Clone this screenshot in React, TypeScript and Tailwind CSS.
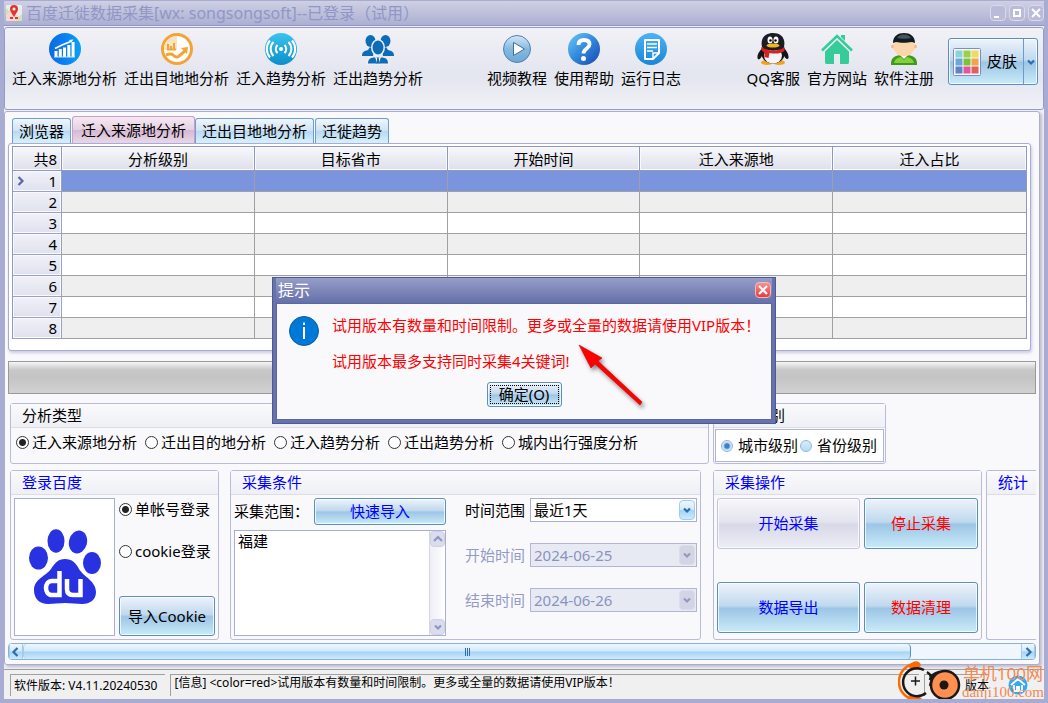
import React, { useState } from 'react';

const BLUE_BTN =
  'rounded-[3px] border border-[#5b8fc0] bg-[linear-gradient(to_bottom,#eef3fb_0%,#c0d9ee_46%,#9dc5e5_52%,#c9ebf9_100%)] shadow-[inset_0_0_0_1px_rgba(255,255,255,0.75)]';
const GRAY_BTN =
  'rounded-[3px] border border-[#c3c4dc] bg-[linear-gradient(to_bottom,#f6f6fa_0%,#e4e4ee_46%,#d8d9e7_52%,#ecedf5_100%)] shadow-[inset_0_0_0_1px_rgba(255,255,255,0.75)]';
const SMALL_BLUE =
  'border border-[#a5cbea] bg-[linear-gradient(to_bottom,#eef8ff_0%,#cfe9fb_48%,#a5d3f3_52%,#cdeaff_100%)]';
const RADIO =
  "m-0 h-[13px] w-[13px] shrink-0 appearance-none rounded-full border border-[#333] bg-white checked:bg-[radial-gradient(circle,#222_0_3px,#fff_4px)]";
const RADIO_BLUE =
  'm-0 h-3 w-3 shrink-0 appearance-none rounded-full border border-[#8fb4dc] bg-[linear-gradient(to_bottom,#d8ecf9,#b5dcf5)] checked:bg-[radial-gradient(circle,#3c80c8_0_2px,#d3e9f9_4px)]';

const columns = ['分析级别', '目标省市', '开始时间', '迁入来源地', '迁入占比'];
const rows = [1, 2, 3, 4, 5, 6, 7, 8];
const types = ['迁入来源地分析', '迁出目的地分析', '迁入趋势分析', '迁出趋势分析', '城内出行强度分析'];
const tabs = ['浏览器', '迁入来源地分析', '迁出目地地分析', '迁徙趋势'];

function Chevron({ dir, color = '#2f6cae' }: { dir: 'left' | 'right' | 'up' | 'down'; color?: string }) {
  const d = {
    left: 'M6.5 1 2.5 5l4 4',
    right: 'M3.5 1l4 4-4 4',
    up: 'M1 7l4-4 4 4',
    down: 'M2 3.5l3 3 3-3',
  }[dir];
  return (
    <svg width="10" height="10" viewBox="0 0 10 10" fill="none" stroke={color} strokeWidth="2.2">
      <path d={d} />
    </svg>
  );
}

/* ---- toolbar icons ---- */

const ChartIcon = () => (
  <svg width="32" height="32" viewBox="0 0 32 32">
    <defs>
      <linearGradient id="chart" x1="0" y1="0" x2="1" y2="0">
        <stop offset="0" stopColor="#0a6de0" />
        <stop offset=".5" stopColor="#0a80f5" />
        <stop offset="1" stopColor="#0aa2f2" />
      </linearGradient>
    </defs>
    <circle cx="16" cy="16" r="16" fill="url(#chart)" />
    <path d="M5.500 24v-6h3v6zM9.800 24v-8h3v8zM14 24v-9.500h3V24zM18.300 24V12h3v12zM22.600 24V9h3v15z" fill="#fff" />
    <path d="M6 15.500 13 12l5-2 5-2" fill="none" stroke="#fff" strokeWidth="1.500" />
    <path d="M20 7l4.500-.5-2.500 3z" fill="#fff" />
    <path d="M5 24h21" stroke="#cfe6ff" />
  </svg>
);

const OutIcon = () => (
  <svg width="32" height="32" viewBox="0 0 32 32">
    <circle cx="16" cy="16" r="14.500" fill="#fff" stroke="#f4a335" strokeWidth="3" />
    <path d="M3 17A13 13 0 0 1 16 3v14z" fill="#fbe3bf" />
    <path d="M7 11v5M10 13v3M13 10v6M6 16.500h9" stroke="#f4a335" strokeWidth="2" />
    <path d="M5 22c3-1 5-2 7 0s4 3 6 1l7-6" fill="none" stroke="#f4a335" strokeWidth="3" />
    <path d="M20 15l7-1-1 7z" fill="#f4a335" />
  </svg>
);

const SignalIcon = () => (
  <svg width="32" height="32" viewBox="0 0 32 32">
    <defs>
      <linearGradient id="sig" x1="0" y1="0" x2="0" y2="1">
        <stop offset="0" stopColor="#3cc3ee" />
        <stop offset="1" stopColor="#0a8fcb" />
      </linearGradient>
    </defs>
    <circle cx="16" cy="16" r="16" fill="url(#sig)" />
    <circle cx="16" cy="16" r="2" fill="#fff" />
    <path
      d="M12.500 12a5.500 5.500 0 0 0 0 8M19.500 12a5.500 5.500 0 0 1 0 8M8.500 9a10 10 0 0 0 0 14M23.500 9a10 10 0 0 1 0 14M5 7.500a13 13 0 0 0 0 17M27 7.500a13 13 0 0 1 0 17"
      fill="none"
      stroke="#fff"
      strokeWidth="2"
    />
  </svg>
);

const PeopleIcon = () => (
  <svg width="32" height="32" viewBox="0 0 32 32" fill="#0c6cb8">
    <ellipse cx="8.500" cy="8" rx="5" ry="6" />
    <ellipse cx="23.500" cy="8" rx="5" ry="6" />
    <path d="M0 23c0-4 2-5 6-6l2-3 4 3-1 6zM32 23c0-4-2-5-6-6l-2-3-4 3 1 6z" />
    <path d="M4 32c0-6 3-8 8-8h8c5 0 8 2 8 8z" fill="#eceef6" />
    <path d="M6 30.500c0-4 2-6 7-6h6c5 0 7 2 7 6z" />
    <ellipse cx="16" cy="14.500" rx="6.200" ry="7.800" stroke="#eceef6" strokeWidth="1.500" />
    <path d="M13 23.500l3 2 3-2-2 7h-2z" fill="#fff" />
    <path d="M15.300 25h1.400l1 5.500h-3.400z" />
  </svg>
);

const PlayIcon = () => (
  <svg width="32" height="32" viewBox="0 0 32 32">
    <defs>
      <linearGradient id="play" x1="0" y1="0" x2="0" y2="1">
        <stop offset="0" stopColor="#d5e8f6" />
        <stop offset=".5" stopColor="#86b9df" />
        <stop offset="1" stopColor="#6ea7d5" />
      </linearGradient>
    </defs>
    <circle cx="16" cy="16" r="13.500" fill="url(#play)" stroke="#4f80b2" />
    <path d="M12.500 9.500v13l11-6.500z" fill="#fff" stroke="#3e6ea4" />
  </svg>
);

const HelpIcon = () => (
  <svg width="32" height="32" viewBox="0 0 32 32">
    <defs>
      <linearGradient id="help" x1="0" y1="0" x2="1" y2="1">
        <stop offset="0" stopColor="#6cc9f5" />
        <stop offset=".5" stopColor="#3287dc" />
        <stop offset="1" stopColor="#1745ad" />
      </linearGradient>
    </defs>
    <circle cx="16" cy="16" r="16" fill="url(#help)" />
    <path d="M10.500 12c0-3.500 2-5 5.500-5s5.500 1.500 5.500 4.500c0 4-6 4-6 9" fill="none" stroke="#fff" strokeWidth="3.800" />
    <circle cx="15.500" cy="25.500" r="2.500" fill="#fff" />
  </svg>
);

const LogIcon = () => (
  <svg width="32" height="32" viewBox="0 0 32 32">
    <defs>
      <linearGradient id="log" x1="0" y1="0" x2="0" y2="1">
        <stop offset="0" stopColor="#4fb2f4" />
        <stop offset="1" stopColor="#1a86d6" />
      </linearGradient>
    </defs>
    <circle cx="16" cy="16" r="16" fill="url(#log)" />
    <path d="M15 26h-5V7h14v13l-6 6z" fill="none" stroke="#fff" strokeWidth="2" strokeLinejoin="round" />
    <path d="M12 11h10M12 14.500h10M12 18h6" stroke="#fff" strokeWidth="1.500" />
    <path d="M18 25v-5h5" fill="none" stroke="#fff" strokeWidth="1.500" />
  </svg>
);

const PenguinIcon = () => (
  <svg width="32" height="32" viewBox="0 0 32 32">
    <ellipse cx="10" cy="29.500" rx="6" ry="2.500" fill="#f6a21b" />
    <ellipse cx="22" cy="29.500" rx="6" ry="2.500" fill="#f6a21b" />
    <path d="M6 14C4 17 0 20 0.500 25c1 3 3 1 5-3l21 0c2 4 4 5 5 3 .5-5-3-8-5-11z" fill="#15161c" />
    <ellipse cx="16" cy="21" rx="11.500" ry="9.500" fill="#15161c" />
    <ellipse cx="16" cy="22.500" rx="9" ry="8" fill="#f4f4f8" />
    <path d="M5 14C3 4 9 0 16 0s13 4 11 14c-6 5-16 5-22 0z" fill="#1b1d24" />
    <ellipse cx="13" cy="7" rx="2.500" ry="3.500" fill="#fff" />
    <ellipse cx="19" cy="7" rx="2.500" ry="3.500" fill="#fff" />
    <circle cx="13.500" cy="7.500" r="1.200" />
    <circle cx="18.500" cy="7.500" r="1.200" />
    <ellipse cx="16" cy="12.500" rx="6.500" ry="2" fill="#f7b51d" />
    <path d="M4.500 14c7 5 16 5 23 0l0 4c-5 3-9 3-15 2l-1 5-4-1v-5c-2 0-4-2-3-5z" fill="#dc1f1f" />
  </svg>
);

const HomeIcon = () => (
  <svg width="32" height="32" viewBox="0 0 32 32" fill="#36cc9a">
    <path d="M1 17.500 16 3l15 14.500" fill="none" stroke="#36cc9a" strokeWidth="2.600" />
    <path d="M4 18.500 16 7l12 11.500v11q0 1.500-2 1.500h-7V21h-6v10H6q-2 0-2-1.500z" />
    <path d="M20 4V2h4v6z" />
  </svg>
);

const UserIcon = () => (
  <svg width="32" height="32" viewBox="0 0 32 32">
    <path d="M3 31c0-6 3-8 9-9h8c6 1 9 3 9 9v1H3z" fill="#3c9a1d" />
    <path d="M6 30c1-4 3-5 7-6l3 3 3-3c4 1 6 2 7 6z" fill="#85cf3c" />
    <path d="M12 22l4 4 4-4z" fill="#fff" />
    <circle cx="5" cy="13.500" r="2" fill="#eebb88" />
    <circle cx="27" cy="13.500" r="2" fill="#eebb88" />
    <ellipse cx="16" cy="13.500" rx="10.500" ry="10" fill="#fbd5ac" />
    <path d="M5 10C5 3 10 0 16 0s11 3 11 10l-3-1c-5 1-12 1-16 0z" fill="#121a22" />
    <path d="M9 5c2-4 10-5 14 0-4 1-10 1-14 0z" fill="#46545f" />
  </svg>
);

const SkinIcon = () => {
  const c = ['#8ad3dc', '#9ccf4b', '#eedb61', '#6ba6dd', '#7cc13a', '#f0a44c', '#5f84c6', '#e4569a', '#e0605a'];
  return (
    <svg width="28" height="28" viewBox="0 0 28 28">
      <rect x=".5" y=".5" width="27" height="27" rx="1" fill="#f4f6fb" stroke="#7f8fb5" />
      {c.map((f, i) => (
        <rect key={f} x={2.5 + (i % 3) * 8} y={2.5 + Math.floor(i / 3) * 8} width="7" height="7" fill={f} />
      ))}
    </svg>
  );
};

const PinIcon = () => (
  <svg width="16" height="16" viewBox="0 0 16 16">
    <rect width="16" height="16" rx="1" fill="#e8eef0" />
    <path d="M0 10l5-3 11 6v3H0z" fill="#f4d6d2" />
    <path d="M0 3l5 4-5 3zM10 14l6-5v7h-6z" fill="#cfe3b4" />
    <path d="M8 12C5 7 4 6 4 4a4 4 0 0 1 8 0c0 2-1 3-4 8z" fill="#e3342f" />
    <circle cx="8" cy="4" r="1.500" fill="#fff" />
    <path d="M4 13h3M9 13h3" stroke="#e3342f" strokeWidth="2" />
  </svg>
);

const PawLogo = () => (
  <svg width="72" height="76" viewBox="0 0 72 76" role="img" aria-label="百度">
    <g fill="#2932e1">
      <ellipse cx="9.500" cy="29" rx="9.500" ry="11.500" />
      <ellipse cx="27" cy="12" rx="8.500" ry="11.800" />
      <ellipse cx="49" cy="13" rx="9" ry="11.500" transform="rotate(14 49 13)" />
      <ellipse cx="63" cy="34" rx="9" ry="11" />
      <path d="M36 30c7 0 11 4 14 10 5 8 17 12 17 23 0 8-6 12-14 12-6 0-11-1-17-1s-11 1-17 1C11 75 5 70 5 61c0-11 12-14 17-21 4-6 7-10 14-10z" />
    </g>
    <g fill="none" stroke="#fff" strokeWidth="4.500">
      <path d="M30.500 42v24H23c-8 0-8-14 0-14h7M38 50v10q0 6 6 6h7.500V50" />
    </g>
  </svg>
);

function ToolButton({ icon, text }: { icon: React.ReactNode; text: string }) {
  return (
    <button type="button" className="flex flex-col items-center gap-[3px] whitespace-nowrap leading-5">
      {icon}
      {text}
    </button>
  );
}

function Group({
  title,
  className = '',
  blue = true,
  children,
}: {
  title: string;
  className?: string;
  blue?: boolean;
  children?: React.ReactNode;
}) {
  return (
    <section className={`flex flex-col rounded-[3px] border border-[#b9bbdb] ${className}`}>
      <h2
        className={`h-6 shrink-0 border-b border-[#dcdde8] bg-[linear-gradient(to_bottom,#fafafc,#eff0f5)] pl-[11px] leading-[22px] ${
          blue ? 'text-[#0000ff]' : 'text-black'
        }`}
      >
        {title}
      </h2>
      {children}
    </section>
  );
}

function DateField({ id, label, value }: { id: string; label: string; value: string }) {
  return (
    <div className="flex items-center gap-[5px]">
      <label htmlFor={id} className="shrink-0 text-[#959bc6]">
        {label}
      </label>
      <div className="flex h-6 flex-1 items-center border border-[#b3b5d8] bg-[#e8eaf3] p-px">
        <input id={id} disabled value={value} readOnly className="h-5 w-full min-w-0 bg-transparent pl-0.5 text-[#8a93bf]" />
        <span className="flex h-5 w-4 shrink-0 items-center justify-center rounded-sm border border-[#dcdcea] bg-[#d3d4e4]">
          <Chevron dir="down" color="#9498c0" />
        </span>
      </div>
    </div>
  );
}

function DataGrid() {
  return (
    <div className="rounded-[3px] border border-[#a9abd8] bg-white px-[3px] pt-0.5 pb-[11px] shadow-[1px_2px_3px_rgba(120,120,170,0.35)]">
      <table className="w-full table-fixed border-separate border-spacing-0 border border-b-0 border-[#8f96c8] text-center">
        <thead>
          <tr className="h-6 bg-[linear-gradient(to_bottom,#f8f8fb,#dcdeea)] leading-5">
            <th className="w-[49px] border-r border-b border-[#8f96c8] p-0 pr-1 text-right font-normal shadow-[inset_0_0_0_1px_#fafafd]">
              共8
            </th>
            {columns.map(c => (
              <th key={c} className="border-r border-b border-[#8f96c8] p-0 font-normal shadow-[inset_0_0_0_1px_#fafafd] last:border-r-0">
                {c}
              </th>
            ))}
          </tr>
        </thead>
        <tbody>
          {rows.map(r => (
            <tr key={r} className="h-[21px] bg-white leading-5 even:bg-[#efefef] first:bg-[#7a95dd]">
              <th className="border-r border-b border-[#9aa0cc] bg-[linear-gradient(to_bottom,#f0f1f8,#dfe1ee)] p-0 font-normal shadow-[inset_0_0_0_1px_#fafafd]">
                <span className="flex h-5 items-center justify-between pr-1 pl-0.5">
                  <span>{r === 1 && <Chevron dir="right" color="#5a66b4" />}</span>
                  {r}
                </span>
              </th>
              {columns.map(c => (
                <td key={c} className="border-r border-b border-[#a0a0a0] p-0 last:border-r-0" />
              ))}
            </tr>
          ))}
        </tbody>
      </table>
    </div>
  );
}

function Dialog({ onClose }: { onClose: () => void }) {
  return (
    <div className="absolute inset-0 flex items-center justify-center">
      <div role="dialog" aria-label="提示" className="relative w-[504px] border border-[#4e5a96] bg-[#6873ae] p-[3px] pt-0">
        <div className="flex h-[25px] items-center justify-between bg-[linear-gradient(to_bottom,#969dc8,#6570aa)] pr-px pl-0.5 text-base text-white">
          <span>提示</span>
          <button
            type="button"
            aria-label="关闭"
            onClick={onClose}
            className="flex h-4 w-4 items-center justify-center rounded-sm border border-[#f3b9bd] bg-[linear-gradient(to_bottom,#f5918f,#ea3b3d)]"
          >
            <svg width="10" height="10" viewBox="0 0 10 10" stroke="#fff" strokeWidth="2.200">
              <path d="M1 1l8 8M9 1L1 9" />
            </svg>
          </button>
        </div>
        <div className="border border-[#5b66a3] bg-[#f9f9fc] px-3 pb-3">
          <div className="flex gap-[13px] pt-3 text-[#ff0000]">
            <svg width="30" height="30" viewBox="0 0 30 30" className="shrink-0">
              <circle cx="15" cy="15" r="14.500" fill="#0078d7" stroke="#0a5ca3" />
              <path d="M15 11v12M15 6.500v2.500" stroke="#fff" strokeWidth="2" />
            </svg>
            <div className="leading-[18px] whitespace-nowrap">
              <p>试用版本有数量和时间限制。更多或全量的数据请使用VIP版本！</p>
              <p className="mt-[18px]">试用版本最多支持同时采集4关键词!</p>
            </div>
          </div>
          <div className="mt-3 flex justify-center">
            <button
              type="button"
              onClick={onClose}
              className={`${BLUE_BTN} h-[25px] w-[75px] p-0.5`}
            >
              <span className="flex h-full items-center justify-center border border-dotted border-black">确定(O)</span>
            </button>
          </div>
        </div>
        {/* red pointer */}
        <svg width="76" height="70" viewBox="0 0 76 70" className="absolute top-16 left-[300px] drop-shadow-[2px_3px_2px_rgba(0,0,0,0.45)]">
          <path d="M6 3l23 13-4 3 44 41-2 3L22 22l-4 4z" fill="#f00" stroke="#d00000" strokeWidth=".6" />
        </svg>
      </div>
    </div>
  );
}

function Watermark() {
  return (
    <div className="absolute right-0 -bottom-1 flex h-[42px] items-center text-[#f28a52]">
      <svg width="64" height="42" viewBox="0 0 64 42">
        <path d="M20 2C8 3 1 11 1 21s8 18 20 19" fill="none" stroke="#ff6a00" strokeWidth="2.500" />
        <path d="M11 5c4-6 10-6 12-1l-2 3c-3-1-6 0-9 2zM10 35c4 5 10 7 14 3l-3-3c-3 1-6 1-9-1z" fill="#ff6a00" />
        <path d="M26 9a14 14 0 1 0 2 23" fill="none" stroke="#1d1717" strokeWidth="2.500" />
        <path d="M13 20h9M17.500 15.500v9" stroke="#1d1717" strokeWidth="1.500" />
        <path d="M29 11q7 4 3 14M41 11q-8 2-9 8" fill="none" stroke="#1d1717" strokeWidth="2.500" />
        <circle cx="47" cy="24" r="14" fill="#ff9050" stroke="#1d1717" strokeWidth="2.500" />
        <circle cx="46" cy="24" r="4.500" fill="#1d1717" />
      </svg>
      <div className="text-center">
        <div className="text-[17px] leading-5">单机100网</div>
        <div className="font-['Liberation_Serif',serif] text-[15px] leading-4">danji100.com</div>
      </div>
    </div>
  );
}

export default function App() {
  const [open, setOpen] = useState(true);
  const [tab, setTab] = useState(1);

  return (
    <div className="relative flex min-h-screen flex-col overflow-hidden border-t border-r-4 border-b-4 border-l-4 border-[#a9acd2] bg-[#efeff3] font-['Noto_Sans','Noto_Sans_CJK_SC',sans-serif] text-[15px] text-black">
      <header className="flex h-[25px] items-center justify-between border-b border-[#8f97c6] bg-[linear-gradient(to_bottom,#cfd0e4,#acafd2)] pl-0.5">
        <div className="flex items-center gap-1 text-base text-[#9097c6]">
          <PinIcon />
          <h1>百度迁徙数据采集[wx: songsongsoft]--已登录（试用）</h1>
        </div>
        <div className="flex gap-[3px]">
          {['M2 10h5', 'M3 3h6v6H3z', 'M2 2l8 8M10 2l-8 8'].map((d, i) => (
            <button
              key={d}
              type="button"
              aria-label={['最小化', '最大化', '关闭'][i]}
              className="flex h-4 w-4 items-center justify-center rounded-sm border border-[#d9daea] bg-[#b9bbd8]"
            >
              <svg width="12" height="12" viewBox="0 0 12 12" fill="none" stroke="#fff" strokeWidth="2">
                <path d={d} />
              </svg>
            </button>
          ))}
        </div>
      </header>

      <nav className="mt-px flex h-[83px] items-start rounded-[3px] border border-[#939bc9] bg-[linear-gradient(to_bottom,#f1f1f6,#e3e5ef_60%,#f1f2f6)] pt-[5px] pr-[5px] pl-[7px]">
        <div className="flex gap-[7px]">
          <ToolButton icon={<ChartIcon />} text="迁入来源地分析" />
          <ToolButton icon={<OutIcon />} text="迁出目地地分析" />
          <ToolButton icon={<SignalIcon />} text="迁入趋势分析" />
          <ToolButton icon={<PeopleIcon />} text="迁出趋势分析" />
        </div>
        <div className="ml-16 flex gap-[7px]">
          <ToolButton icon={<PlayIcon />} text="视频教程" />
          <ToolButton icon={<HelpIcon />} text="使用帮助" />
          <ToolButton icon={<LogIcon />} text="运行日志" />
        </div>
        <div className="ml-auto flex gap-[7px]">
          <ToolButton icon={<PenguinIcon />} text="QQ客服" />
          <ToolButton icon={<HomeIcon />} text="官方网站" />
          <ToolButton icon={<UserIcon />} text="软件注册" />
        </div>
        <div className={`${BLUE_BTN} mt-[5px] ml-3.5 flex h-[47px]`}>
          <button type="button" className="flex items-center gap-1.5 pr-1.5 pl-1">
            <SkinIcon />
            皮肤
          </button>
          <button type="button" aria-label="更多皮肤" className="flex w-[14px] items-center justify-center border-l border-[#6b9ac8]">
            <Chevron dir="down" />
          </button>
        </div>
      </nav>

      <main className="mt-px mr-1 flex flex-col rounded-[3px] border border-[#a9add4] bg-[#f9f9fc] pt-1 pr-[3px] pb-1 pl-[3px] shadow-[2px_2px_3px_rgba(120,120,150,0.4)]">
        <div role="tablist" className="flex items-end pl-1">
          {tabs.map((t, i) => (
            <button
              key={t}
              type="button"
              role="tab"
              aria-selected={tab === i}
              onClick={() => setTab(i)}
              className={
                tab === i
                  ? 'h-[27px] rounded-t-[3px] border border-b-0 border-[#c99fc6] bg-[linear-gradient(to_bottom,#f6e9f2,#e6d0e2_50%,#d6b9d4_51%,#e9d7e8)] px-2'
                  : 'mr-px h-[25px] rounded-t-[3px] border border-b-0 border-[#6f9fd0] bg-[linear-gradient(to_bottom,#f0f6fc,#cfe2f3_50%,#b6d9f2_51%,#d8f1fd)] px-[6px]'
              }
            >
              {t}
            </button>
          ))}
        </div>
        <div className="mr-[5px]">
          <DataGrid />
        </div>

        <div
          role="progressbar"
          aria-valuenow={0}
          aria-label="采集进度"
          className="mt-[10px] h-[33px] border border-[#999] bg-[linear-gradient(to_bottom,#f5f5f5,#c8c8c8_25%,#c4c4c4_50%,#d2d2d2)]"
        />

        <div className="mt-[9px] flex gap-1 pl-0.5">
          <Group title="分析类型" blue={false} className="h-[61px] w-[699px]">
            <div className="flex gap-2 pt-[3px] pl-[5px]">
              {types.map((t, i) => (
                <label key={t} className="flex items-center gap-[3px] whitespace-nowrap">
                  <input type="radio" name="type" defaultChecked={i === 0} className={RADIO} />
                  {t}
                </label>
              ))}
            </div>
          </Group>
          <Group title="分析级别" blue={false} className="h-[61px] w-[173px]">
            <div className="m-px flex flex-1 items-center gap-0.5 border border-[#b3b5d8] bg-white pl-[5px]">
              {['城市级别', '省份级别'].map((t, i) => (
                <label key={t} className="flex items-center gap-[5px] whitespace-nowrap">
                  <input type="radio" name="level" defaultChecked={i === 0} className={RADIO_BLUE} />
                  {t}
                </label>
              ))}
            </div>
          </Group>
        </div>

        <div className="mt-1.5 flex h-[170px] overflow-hidden pl-0.5">
          <Group title="登录百度" className="mr-[11px] w-[209px] shrink-0">
            <div className="flex flex-1 gap-1 p-[3px]">
              <div className="flex w-[101px] items-center justify-center border border-[#a9aed6] bg-white">
                <PawLogo />
              </div>
              <div className="flex flex-1 flex-col">
                <label className="flex h-[22px] items-center gap-[3px] whitespace-nowrap">
                  <input type="radio" name="login" defaultChecked className={RADIO} />
                  单帐号登录
                </label>
                <label className="mt-5 flex h-[22px] items-center gap-[3px] whitespace-nowrap">
                  <input type="radio" name="login" className={RADIO} />
                  cookie登录
                </label>
                <button type="button" className={`${BLUE_BTN} mt-auto h-10`}>
                  导入Cookie
                </button>
              </div>
            </div>
          </Group>

          <Group title="采集条件" className="mr-3 w-[471px] shrink-0">
            <div className="flex flex-1 gap-[19px] p-[3px]">
              <div className="flex w-[212px] flex-col gap-[5px]">
                <div className="flex items-center justify-between">
                  <label htmlFor="scope">采集范围：</label>
                  <button type="button" className={`${BLUE_BTN} h-[27px] w-[132px] text-[#0000ff]`}>
                    快速导入
                  </button>
                </div>
                <div className="flex flex-1 border border-[#a9aed6] bg-white">
                  <textarea
                    id="scope"
                    defaultValue="福建"
                    className="min-w-0 flex-1 resize-none overflow-hidden pl-[3px] leading-5 outline-none"
                  />
                  <div className="flex w-4 flex-col justify-between border-l border-[#d5d6e8] bg-[linear-gradient(to_right,#eeeef5,#fff)]">
                    <button type="button" aria-label="向上" className="flex h-4 items-center justify-center rounded-sm border border-[#cfd0e4] bg-[#dcddec]">
                      <Chevron dir="up" color="#8f96c6" />
                    </button>
                    <button type="button" aria-label="向下" className="flex h-4 items-center justify-center rounded-sm border border-[#cfd0e4] bg-[#dcddec]">
                      <Chevron dir="down" color="#8f96c6" />
                    </button>
                  </div>
                </div>
              </div>
              <div className="flex flex-1 flex-col gap-[21px]">
                <div className="flex items-center gap-[5px]">
                  <label htmlFor="range" className="shrink-0">
                    时间范围
                  </label>
                  <div className="relative flex h-6 flex-1 border border-[#a9aed6] bg-white">
                    <select id="range" className="w-full appearance-none bg-transparent pl-[3px] outline-none">
                      <option>最近1天</option>
                    </select>
                    <span className={`${SMALL_BLUE} pointer-events-none absolute top-px right-px flex h-5 w-4 items-center justify-center rounded-sm`}>
                      <Chevron dir="down" />
                    </span>
                  </div>
                </div>
                <DateField id="start" label="开始时间" value="2024-06-25" />
                <DateField id="end" label="结束时间" value="2024-06-26" />
              </div>
            </div>
          </Group>

          <Group title="采集操作" className="mr-1 w-[269px] shrink-0">
            <div className="grid flex-1 grid-cols-[143px_114px] content-between gap-x-1 px-[3px] pt-[3px] pb-1.5">
              <button type="button" className={`${GRAY_BTN} h-[51px] text-[#0000ff]`}>开始采集</button>
              <button type="button" className={`${BLUE_BTN} h-[51px] text-[#ff0000]`}>停止采集</button>
              <button type="button" className={`${BLUE_BTN} h-[51px] text-[#0000ff]`}>数据导出</button>
              <button type="button" className={`${BLUE_BTN} h-[51px] text-[#ff0000]`}>数据清理</button>
            </div>
          </Group>

          <Group title="统计" className="flex-1 rounded-r-none border-r-0" />
        </div>

        {/* horizontal scroll bar */}
        <div className="mt-[3px] flex h-[17px] rounded-sm border border-[#85b3da] bg-[#eff7fd]">
          <button type="button" aria-label="向左" className={`${SMALL_BLUE} flex w-[14px] items-center justify-center border-y-0`}>
            <Chevron dir="left" />
          </button>
          <div className="flex flex-1">
            <div className={`${SMALL_BLUE} flex w-[89%] items-center justify-center gap-px rounded-sm border-y-0 border-r-[#5b8fc0]`}>
              <span className="h-2 w-px bg-[#2f6cae]" />
              <span className="h-2 w-px bg-[#2f6cae]" />
              <span className="h-2 w-px bg-[#2f6cae]" />
            </div>
          </div>
          <button type="button" aria-label="向右" className={`${SMALL_BLUE} flex w-[14px] items-center justify-center border-y-0`}>
            <Chevron dir="right" />
          </button>
        </div>
      </main>

      <footer className="mt-1 flex flex-1 gap-[5px] border-t border-[#a0a0a0] bg-[#f0f0f0] pt-1 pl-1.5 text-[12px]">
        <div className="flex h-[22px] items-center border-t border-l border-[#a0a0a0] pr-2 pl-[3px]">软件版本: V4.11.20240530</div>
        <div className="h-[22px] flex-1 border-t border-l border-[#a0a0a0] pl-[3px] leading-4">
          [信息] &lt;color=red&gt;试用版本有数量和时间限制。更多或全量的数据请使用VIP版本！
        </div>
        <div className="flex h-[22px] items-center justify-end border-t border-l border-[#a0a0a0] pl-10">版本</div>
        <div className="mr-4 ml-3.5 flex h-[22px] items-center">
          <svg width="20" height="20" viewBox="0 0 20 20">
            <circle cx="10" cy="10" r="9.500" fill="#35a8f0" />
            <path d="M3 10l7-6 7 6M6 10v6h3v-4h2v4h3v-6" fill="none" stroke="#fff" strokeWidth="1.800" />
          </svg>
        </div>
      </footer>

      {open && <Dialog onClose={() => setOpen(false)} />}
      <Watermark />
    </div>
  );
}
